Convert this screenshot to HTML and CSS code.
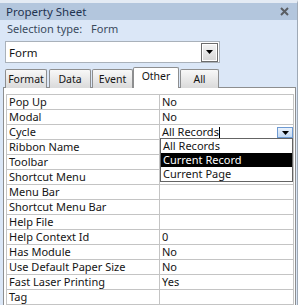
FILE: index.html
```html
<!DOCTYPE html>
<html lang="en">

<head>
    <meta charset="UTF-8">
    <title>Property Sheet</title>
    <link rel="stylesheet" href="styles.css">
</head>

<body>

    <div class="sheet">
        <div class="titlebar">
            <span class="title">Property Sheet</span>
            <svg class="close" width="9" height="9" viewBox="0 0 9 9">
                <path d="M1 1 L8 8 M8 1 L1 8" stroke="#5a5e63" stroke-width="2" />
            </svg>
        </div>

        <div class="selection">
            <span>Selection type:</span>
            <span class="sel-value">Form</span>
        </div>

        <div class="combo">
            <span class="combo-text">Form</span>
            <span class="combo-btn">
                <svg width="7" height="4" viewBox="0 0 7 4"><path d="M0 0 H7 L3.5 4 Z" fill="#000" /></svg>
            </span>
        </div>

        <div class="tabs">
            <div class="tab tab-format">Format</div>
            <div class="tab tab-data">Data</div>
            <div class="tab tab-event">Event</div>
            <div class="tab tab-other active">Other</div>
            <div class="tab tab-all">All</div>
        </div>

        <div class="panel">
            <div class="props">
                <div class="cell">Pop Up</div>
                <div class="cell">No</div>
                <div class="cell">Modal</div>
                <div class="cell">No</div>
                <div class="cell">Cycle</div>
                <div class="cell cycle">
                    <span class="edit">All Records<span class="caret"></span></span>
                    <span class="cell-btn">
                        <svg width="7" height="5" viewBox="0 0 7 5"><path d="M0 1 H7 L3.5 5 Z" fill="#000" /></svg>
                    </span>
                    <div class="dropdown">
                        <div class="option">All Records</div>
                        <div class="option selected">Current Record</div>
                        <div class="option">Current Page</div>
                    </div>
                </div>
                <div class="cell">Ribbon Name</div>
                <div class="cell"></div>
                <div class="cell">Toolbar</div>
                <div class="cell"></div>
                <div class="cell">Shortcut Menu</div>
                <div class="cell"></div>
                <div class="cell">Menu Bar</div>
                <div class="cell"></div>
                <div class="cell">Shortcut Menu Bar</div>
                <div class="cell"></div>
                <div class="cell">Help File</div>
                <div class="cell"></div>
                <div class="cell">Help Context Id</div>
                <div class="cell">0</div>
                <div class="cell">Has Module</div>
                <div class="cell">No</div>
                <div class="cell">Use Default Paper Size</div>
                <div class="cell">No</div>
                <div class="cell">Fast Laser Printing</div>
                <div class="cell">Yes</div>
                <div class="cell">Tag</div>
                <div class="cell"></div>
            </div>
        </div>
    </div>

</body>

</html>
```

FILE: styles.css
```css
body {
    margin: 0;
    font-family: "Noto Sans", sans-serif;
    font-size: 11px;
    color: #141414;
}

.sheet {
    width: 298px;
    height: 305px;
    box-sizing: border-box;
    overflow: hidden;
    background-color: #dbe7f7;
    border-top: 3px solid #e4ebf4;
    border-right: 1px solid #9ea9b6;
}

.titlebar {
    height: 17px;
    background-color: #b3c6dd;
    display: flex;
    align-items: center;
    justify-content: space-between;
    padding: 0 6px;
}

.title {
    font-size: 11.5px;
    color: #1f3350;
}

.close {
    margin-right: 2px;
}

.selection {
    height: 17px;
    line-height: 17px;
    padding-left: 7px;
    color: #3a4a5d;
    font-size: 11px;
}

.sel-value {
    margin-left: 6px;
}

.combo {
    margin: 4px 0 0 5px;
    width: 215px;
    height: 22px;
    box-sizing: border-box;
    background-color: #fff;
    border: 1px solid #a9b1ba;
    display: flex;
    align-items: center;
    justify-content: space-between;
    padding: 0 1px 0 3px;
    font-size: 11.5px;
}

.combo-btn {
    width: 17px;
    height: 19px;
    box-sizing: border-box;
    border: 1px solid #6c6c6c;
    box-shadow: inset 0 0 0 1px #fff;
    background: linear-gradient(#f4f4f4, #d6d6d6);
    display: flex;
    align-items: center;
    justify-content: center;
}

.tabs {
    margin-top: 4px;
    height: 21px;
    margin-bottom: -1px;
    display: flex;
    align-items: flex-end;
    font-size: 10.5px;
}

.tab {
    height: 19px;
    box-sizing: border-box;
    border: 1px solid #8d8e8f;
    border-bottom: none;
    border-radius: 2px 2px 0 0;
    background: linear-gradient(#f8f8f8, #dadada);
    text-align: center;
    line-height: 18px;
}

.tab-format {
    margin-left: 5px;
    width: 42px;
}

.tab-data {
    margin-left: 2px;
    width: 42px;
}

.tab-event {
    margin-left: 1px;
    width: 41px;
}

.tab-other {
    width: 46px;
}

.tab-all {
    margin-left: 1px;
    width: 39px;
}

.tab.active {
    height: 21px;
    background: #fff;
    position: relative;
    z-index: 1;
    line-height: 17px;
}

.panel {
    margin-left: 3px;
    width: 293px;
    height: 230px;
    box-sizing: border-box;
    background-color: #fff;
    border: 1px solid #8d8e8f;
    padding: 6px 1px 0 2px;
}

.props {
    display: grid;
    grid-template-columns: 153px 1fr;
    border-top: 1px solid #c4c4c4;
    border-left: 1px solid #c4c4c4;
}

.cell {
    height: 15px;
    box-sizing: border-box;
    border-right: 1px solid #c4c4c4;
    border-bottom: 1px solid #c4c4c4;
    padding-left: 2px;
    line-height: 14px;
    white-space: nowrap;
}

.cycle {
    position: relative;
    display: flex;
    justify-content: space-between;
}

.caret {
    display: inline-block;
    width: 1px;
    height: 11px;
    background-color: #000;
    vertical-align: -2px;
}

.cell-btn {
    width: 16px;
    height: 11px;
    margin-top: 2px;
    box-sizing: border-box;
    border: 1px solid #6e9ad2;
    background: linear-gradient(#eaf2fc, #c4daf4);
    display: flex;
    align-items: center;
    justify-content: center;
}

.dropdown {
    position: absolute;
    left: 0;
    top: 13px;
    width: 133px;
    box-sizing: border-box;
    background-color: #fff;
    border: 1px solid #646464;
    z-index: 2;
}

.option {
    height: 14px;
    line-height: 14px;
    padding-left: 2px;
}

.option.selected {
    background-color: #000;
    color: #fff;
}
```
